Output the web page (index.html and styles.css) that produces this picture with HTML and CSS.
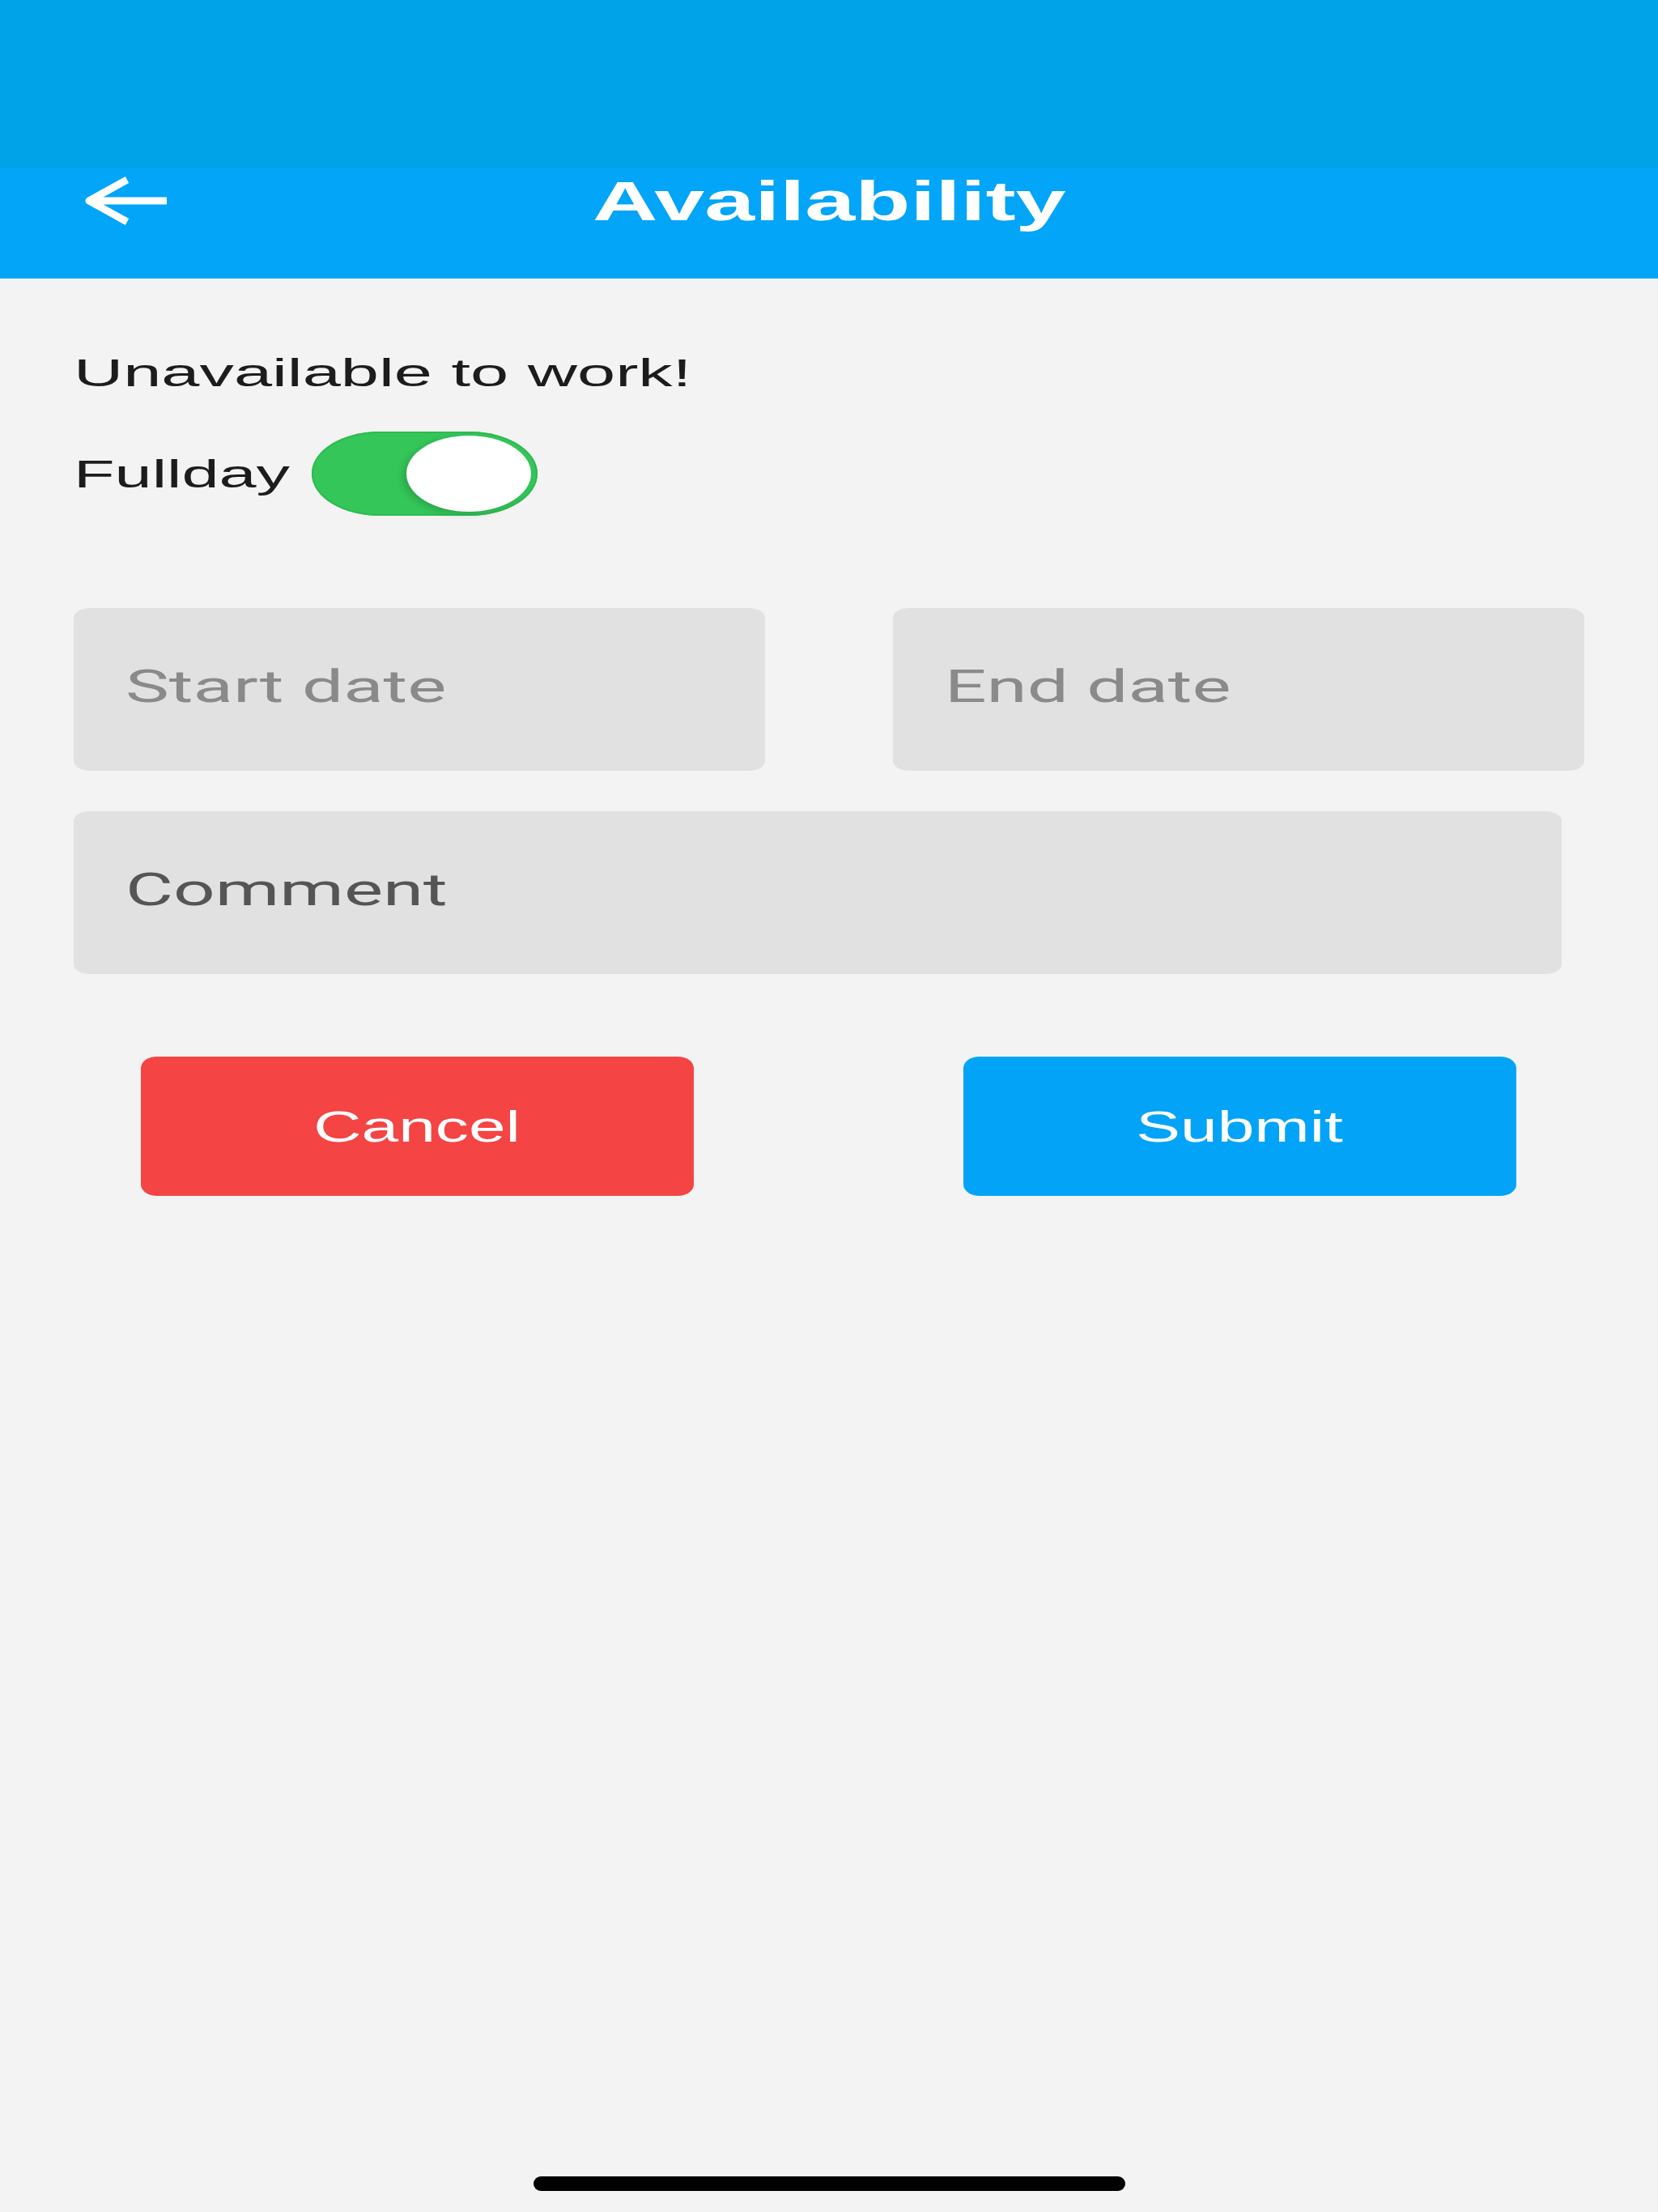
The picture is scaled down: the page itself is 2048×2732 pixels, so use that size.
FILE: index.html
```html
<!DOCTYPE html>
<html lang="en">
<head>
<meta charset="utf-8">
<title>Availability</title>
<link rel="stylesheet" href="styles.css">
</head>
<body>
<div class="screen">
  <div class="statusbar"></div>
  <header class="appbar">
    <button class="back" aria-label="Back">
      <svg viewBox="0 0 104 60" aria-hidden="true">
        <path d="M103 30 H7 M54 4 L7 30 L54 56" fill="none" stroke="#fff" stroke-width="9" stroke-linejoin="round"/>
      </svg>
    </button>
    <h1 class="title"><span class="stretch">Availability</span></h1>
    <div class="appbar-end"></div>
  </header>
  <main class="content">
    <p class="heading"><span class="stretch">Unavailable to work!</span></p>
    <div class="fullday-row">
      <span class="fullday-label"><span class="stretch">Fullday</span></span>
      <div class="toggle" role="switch" aria-checked="true"><div class="knob"></div></div>
    </div>
    <div class="date-row">
      <div class="field date"><span class="stretch">Start date</span></div>
      <div class="field date"><span class="stretch">End date</span></div>
    </div>
    <div class="field comment"><span class="stretch">Comment</span></div>
    <div class="actions">
      <button class="btn cancel"><span class="stretch">Cancel</span></button>
      <button class="btn submit"><span class="stretch">Submit</span></button>
    </div>
  </main>
  <div class="home-indicator"></div>
</div>
</body>
</html>
```
FILE: styles.css
```css
* { box-sizing: border-box; }

body {
  margin: 0;
  background: #f3f3f3;
  font-family: "Liberation Sans", Arial, sans-serif;
}

.screen {
  width: 2048px;
  min-height: 2732px;
  display: flex;
  flex-direction: column;
  background: #f3f3f3;
}

.stretch {
  display: inline-block;
  white-space: nowrap;
  transform-origin: left center;
}

.statusbar {
  height: 208px;
  background: #00a3e7;
}

.appbar {
  height: 136px;
  background: #02a5f7;
  display: grid;
  grid-template-columns: 1fr auto 1fr;
  align-items: start;
}

.back {
  justify-self: start;
  height: 80px;
  display: flex;
  align-items: center;
  padding: 0 0 0 103px;
  margin: 0;
  background: none;
  border: 0;
}

.back svg {
  display: block;
  width: 104px;
  height: 60px;
}

.title {
  margin: 0;
  height: 80px;
  line-height: 80px;
  font-size: 68px;
  font-weight: 700;
  color: #ffffff;
}

.title .stretch {
  transform: scaleX(1.64);
  transform-origin: center;
}

.content {
  display: flex;
  flex-direction: column;
  padding: 86px 91px 0 91px;
}

.heading {
  margin: 0;
  font-size: 49px;
  line-height: 60px;
  color: #1c1c1c;
}

.heading .stretch {
  transform: scaleX(1.73);
}

.fullday-label .stretch {
  transform: scaleX(1.69);
}

.fullday-row {
  display: flex;
  align-items: center;
  height: 104px;
  margin-top: 43px;
}

.fullday-label {
  flex-shrink: 0;
  width: 294px;
  font-size: 49px;
  line-height: 60px;
  color: #1c1c1c;
}

.toggle {
  width: 279px;
  height: 104px;
  border-radius: 84px / 52px;
  background: #34c659;
  box-shadow: inset 0 0 0 2px #2fba51;
  display: flex;
  align-items: center;
  justify-content: flex-end;
  padding-right: 8px;
}

.knob {
  width: 154px;
  height: 94px;
  border-radius: 50%;
  background: #ffffff;
  box-shadow: -5px 3px 9px rgba(0, 0, 0, 0.16);
}

.date-row {
  display: flex;
  justify-content: space-between;
  margin-top: 114px;
}

.field {
  height: 201px;
  background: #e1e1e1;
  border-radius: 20px / 12px;
  padding: 64px 0 0 64px;
  font-family: Roboto, "Liberation Sans", sans-serif;
  font-size: 56px;
  line-height: 66px;
  color: #8a8a8a;
}

.field .stretch {
  transform: scaleX(1.62);
}

.field.date {
  width: 854px;
}

.field.comment {
  width: 1838px;
  margin-top: 50px;
  color: #555555;
}

.actions {
  display: flex;
  justify-content: space-between;
  margin: 102px 84px 0 83px;
}

.btn {
  width: 683px;
  height: 172px;
  margin: 0;
  padding: 0;
  border: 0;
  border-radius: 20px / 14px;
  display: flex;
  align-items: center;
  justify-content: center;
  font-family: "Liberation Sans", Arial, sans-serif;
  font-weight: 400;
  font-size: 54px;
  line-height: 64px;
  color: #ffffff;
}

.btn .stretch {
  transform: scaleX(1.52);
  transform-origin: center;
}

.btn.cancel {
  background: #f44444;
}

.btn.submit {
  background: #03a4f8;
}

.home-indicator {
  width: 731px;
  height: 18px;
  margin: auto auto 26px;
  border-radius: 9px;
  background: #000000;
}
```
